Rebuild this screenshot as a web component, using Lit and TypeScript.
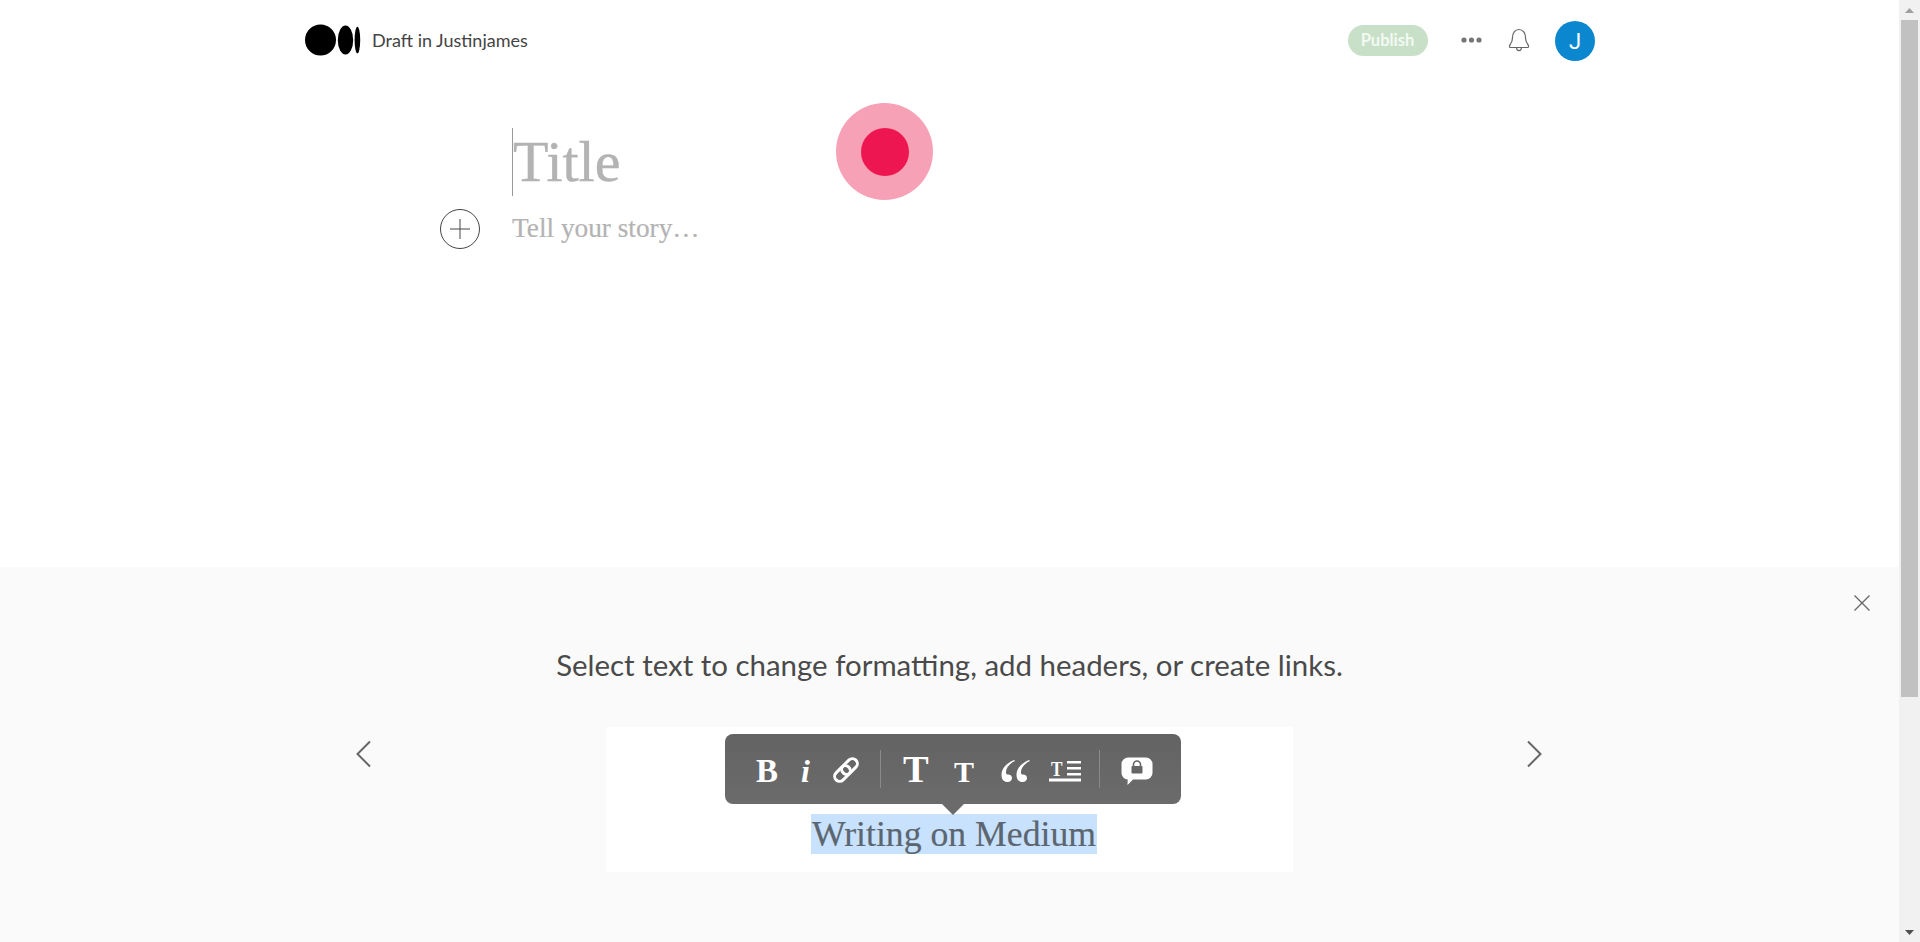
import { LitElement, html, css } from "lit";
import { customElement } from "lit/decorators.js";

@customElement("app-root")
export class AppRoot extends LitElement {
  static styles = css`
    :host { display: block; height: 942px; overflow: hidden; background: #fff; font-family: "Lato", sans-serif; }
    .shell { display: flex; height: 942px; }
    .page { flex: 1; min-width: 0; display: flex; flex-direction: column; position: relative; }
    .top { height: 567px; position: relative; display: flex; flex-direction: column; }
    .nav { display: flex; align-items: center; height: 80px; padding: 0 304px 0 305px; }
    .logo { width: 56px; height: 32px; display: block; }
    .draft { margin-left: 11px; font: 400 18px "Lato", sans-serif; color: #444; }
    .spacer { flex: 1; }
    .publish { width: 80px; height: 31px; border-radius: 16px; background: #c8e0c8; color: #f3f9f3; font: 700 16.5px "Lato", sans-serif; display: flex; align-items: center; justify-content: center; }
    .dots { margin-left: 33px; width: 21px; height: 6px; display: block; }
    .bell { margin-left: 25.5px; width: 24px; height: 26px; display: block; }
    .avatar { margin-left: 24px; margin-top: 2px; width: 40px; height: 40px; border-radius: 50%; background: #0a87cf; color: #fff; font: 400 22px "Roboto", sans-serif; display: flex; align-items: center; justify-content: center; }
    .editor { padding: 48px 0 0 513px; position: relative; }
    .title { position: relative; font: 400 58px/68px "Liberation Serif", serif; color: #b3b3b3; height: 68px; -webkit-text-stroke: 0.4px #b3b3b3; }
    .caret { position: absolute; left: -1px; top: 0; width: 1px; height: 68px; background: #999; }
    .story { margin-top: 13px; margin-left: -1px; font: 400 27.3px/38px "Liberation Serif", serif; color: #b3b3b3; -webkit-text-stroke: 0.2px #b3b3b3; }
    .plus { position: absolute; left: 440px; top: 209px; width: 40px; height: 40px; display: block; }
    .rec { position: absolute; left: 836px; top: 103px; width: 97px; height: 97px; border-radius: 50%; background: #f7a1b6; display: flex; align-items: center; justify-content: center; }
    .rec i { width: 48px; height: 48px; border-radius: 50%; background: #ee1650; display: block; }
    .panel { flex: 1; background: #fafafa; position: relative; display: flex; flex-direction: column; align-items: center; }
    .close { position: absolute; left: 1853px; top: 27px; width: 18px; height: 18px; }
    .hint { margin-top: 79px; font: 400 29.45px/38px "Lato", sans-serif; color: #4a4a4a; }
    .demo { margin-top: 43px; width: 687px; height: 145px; background: #fff; display: flex; flex-direction: column; align-items: center; position: relative; }
    .arrow { position: absolute; top: 172px; width: 18px; height: 30px; }
    .arrow.l { left: 354px; }
    .arrow.r { left: 1526px; }
    .selected { margin-top: 87px; margin-left: 9px; background: #c8e2fd; color: #5c6670; font: 400 35.7px/40px "Liberation Serif", serif; padding: 0 1px; -webkit-text-stroke: 0.2px #5c6670; }
    .toolbar { position: absolute; left: 119px; top: 7px; width: 456px; height: 69.5px; border-radius: 8px; background: linear-gradient(#636363, #6b6b6b); }
    .toolbar svg { display: block; width: 456px; height: 82px; position: absolute; left: 0; top: 0; overflow: visible; }
    .glyph { font-family: "Liberation Serif", serif; font-weight: 700; fill: #fff; }
    .scrollbar { width: 21px; background: #f1f1f1; display: flex; flex-direction: column; align-items: center; }
    .sb-btn { height: 20px; width: 17px; display: flex; align-items: center; justify-content: center; }
    .sb-btn svg { display: block; }
    .thumb { width: 17px; height: 677px; background: #c1c1c1; }
    .sb-rest { flex: 1; }
  `;

  render() {
    return html`<div class="shell">
      <div class="page">
        <div class="top">
          <div class="nav">
            <svg class="logo" viewBox="0 0 56 32"><circle cx="15.5" cy="16" r="15.5"/><ellipse cx="40.5" cy="16" rx="7.7" ry="14.5"/><ellipse cx="52.4" cy="16" rx="2.8" ry="13.3"/></svg>
            <span class="draft">Draft in Justinjames</span>
            <span class="spacer"></span>
            <div class="publish">Publish</div>
            <svg class="dots" viewBox="0 0 21 6" fill="#757575"><circle cx="3" cy="3" r="2.6"/><circle cx="10.5" cy="3" r="2.6"/><circle cx="18" cy="3" r="2.6"/></svg>
            <svg class="bell" viewBox="0 0 24 26" fill="none" stroke="#666" stroke-width="1.2"><path d="M3 20.5c-1.2-1-.6-2 .4-3.3 1.3-1.7 2.1-3 2.1-6.700C5.5 6 8 2.5 12 2.5s6.500 3.500 6.500 8c0 3.700.8 5 2.100 6.700 1 1.300 1.600 2.300.4 3.300z"/><path d="M9.500 20.700c.2 2 1.200 3 2.500 3s2.300-1 2.500-3"/></svg>
            <div class="avatar">J</div>
          </div>
          <div class="editor">
            <div class="title"><span class="caret"></span>Title</div>
            <div class="story">Tell your story…</div>
          </div>
          <svg class="plus" viewBox="0 0 40 40" fill="none" stroke="#444" stroke-width="1"><circle cx="20" cy="20" r="19.500"/><path d="M20 10v20M10 20h20"/></svg>
          <div class="rec"><i></i></div>
        </div>
        <div class="panel">
          <svg class="close" viewBox="0 0 18 18" stroke="#666" stroke-width="1.300"><path d="M1.500 1.500l15 15M16.500 1.500l-15 15"/></svg>
          <svg class="arrow l" viewBox="0 0 18 30" fill="none" stroke="#666" stroke-width="2"><path d="M16 2.500L3.500 15 16 27.500"/></svg>
          <svg class="arrow r" viewBox="0 0 18 30" fill="none" stroke="#666" stroke-width="2"><path d="M2 2.500L14.500 15 2 27.500"/></svg>
          <div class="hint">Select text to change formatting, add headers, or create links.</div>
          <div class="demo">
            <div class="selected">Writing on Medium</div>
            <div class="toolbar">
              <svg viewBox="0 0 456 82">
                <path d="M216 69l12 12 12-12z" fill="#6b6b6b"/>
                <path d="M155.500 16v38M374.500 16v38" stroke="#8a8a8a" stroke-width="1"/>
                <text class="glyph" x="31" y="47.500" font-size="33">B</text>
                <text class="glyph" x="76" y="47.500" font-size="32" font-style="italic">i</text>
                <g transform="translate(121 36) rotate(-45)" fill="none" stroke="#fff" stroke-width="3">
                  <rect x="-14" y="-5" width="18" height="10" rx="5"/>
                  <rect x="-4" y="-5" width="18" height="10" rx="5"/>
                </g>
                <text class="glyph" x="178" y="47.500" font-size="38.500">T</text>
                <text class="glyph" x="229" y="47.500" font-size="30">T</text>
                <g fill="#fff">
                  <path d="M289 26C282 29 276.500 34 276.500 41C276.500 45.500 279 48 282.500 48C285.500 48 287 46 287 44C287 41.500 285 40.500 283 40.500C281.500 40.500 281 40 281 38.500C281 34 284.500 29.500 290 27Z"/>
                  <path d="M304 26C297 29 291.500 34 291.500 41C291.500 45.500 294 48 297.500 48C300.500 48 302 46 302 44C302 41.500 300 40.500 298 40.500C296.500 40.500 296 40 296 38.500C296 34 299.500 29.500 305 27Z"/>
                  <rect x="324" y="44.500" width="32" height="3"/>
                  <rect x="342" y="27" width="14" height="2.500"/>
                  <rect x="342" y="33" width="14" height="2.500"/>
                  <rect x="342" y="39" width="14" height="2.500"/>
                  <path d="M403 23.500h18a6.500 6.500 0 0 1 6.500 6.500v9a6.500 6.500 0 0 1-6.500 6.500h-13l-5.500 5.500.2-5.500a6.500 6.500 0 0 1-6.200-6.500v-9a6.500 6.500 0 0 1 6.500-6.500z"/>
                </g>
                <text class="glyph" font-size="21" transform="translate(326 41.500) scale(.82 1)">T</text>
                <g fill="#666"><rect x="406.500" y="32" width="11" height="7.500" rx="1"/><path d="M408.500 32v-1.500a3.500 3.500 0 0 1 7 0V32" fill="none" stroke="#666" stroke-width="1.600"/></g>
              </svg>
            </div>
          </div>
        </div>
      </div>
      <div class="scrollbar">
        <div class="sb-btn"><svg width="9" height="5" viewBox="0 0 9 5" fill="#a0a0a0"><path d="M4.500 0L9 5H0z"/></svg></div>
        <div class="thumb"></div>
        <div class="sb-rest"></div>
        <div class="sb-btn"><svg width="9" height="5" viewBox="0 0 9 5" fill="#505050"><path d="M4.500 5L9 0H0z"/></svg></div>
      </div>
    </div>`;
  }
}
